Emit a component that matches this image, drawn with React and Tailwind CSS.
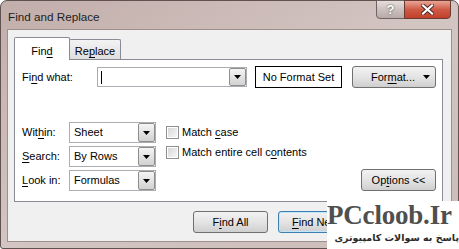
import React from "react";

const U = ({ children }) => (
  <span className="underline decoration-1 underline-offset-[2px]">{children}</span>
);

const Arrow = () => (
  <svg width="7" height="4" viewBox="0 0 7 4">
    <path d="M0 0H7L3.5 4Z" fill="#000" />
  </svg>
);

const ArrowBtn = () => (
  <div className="w-[17px] h-full border border-[#8d8d8d] rounded-[2px] bg-gradient-to-b from-[#f4f4f4] to-[#d2d2d2] flex items-center justify-center shrink-0">
    <Arrow />
  </div>
);

const Combo = ({ value, w }) => (
  <div className={`flex h-[21px] border border-[#abadb3] bg-white ${w}`}>
    <div className="flex-1 flex items-center pl-[4px]">{value}</div>
    <ArrowBtn />
  </div>
);

const Btn = ({ children, w = "w-[75px]", def = false, cls = "" }) => (
  <div
    className={`${w} h-[22px] rounded-[3px] border ${
      def ? "border-[#3c7fb1] shadow-[inset_0_0_0_1px_#bfe6fb]" : "border-[#707070]"
    } bg-gradient-to-b from-[#f2f2f2] via-[#e4e4e4] to-[#cfcfcf] flex items-center justify-center ${cls}`}
  >
    {children}
  </div>
);

const Check = ({ children }) => (
  <div className="flex items-center h-[20px] gap-[3px]">
    <div className="w-[13px] h-[13px] border border-[#8e8f8f] bg-white p-[1px]">
      <div className="w-full h-full bg-gradient-to-br from-[#d8d8d8] to-[#f6f6f6]" />
    </div>
    <span>{children}</span>
  </div>
);

export default function App() {
  return (
    <div
      className="w-[459px] h-[249px] bg-white relative overflow-hidden text-[11px] text-black"
      style={{ fontFamily: '"Liberation Sans", Arial, sans-serif' }}
    >
      <div className="h-full rounded-t-[7px] rounded-b-[3px] border border-[#5f5250] bg-gradient-to-br from-[#c2aeaa] via-[#d3c5c2] to-[#cbbcb8] flex flex-col px-[6px] pb-[6px]">
        {/* title bar */}
        <div className="h-[28px] flex items-start shrink-0">
          <div className="pl-[1px] pt-[7px] text-[11.7px] text-[#1e1e1e]">Find and Replace</div>
          <div className="ml-auto -mt-px flex h-[19px] mr-[1px]">
            <div className="w-[29px] h-full rounded-bl-[4px] border border-[#6e6361] bg-gradient-to-b from-[#e7dedc] via-[#cdc1be] to-[#b8aaa7] flex items-center justify-center text-white font-bold text-[13px] leading-none [text-shadow:0_0_2px_#333]">
              ?
            </div>
            <div className="w-[47px] h-full -ml-px rounded-br-[4px] border border-[#6b3a33] bg-gradient-to-b from-[#e8a596] via-[#cf5a45] to-[#c2402b] flex items-center justify-center">
              <svg width="13" height="11" viewBox="0 0 13 11">
                <path d="M2 1.5L11 9.5M11 1.5L2 9.5" stroke="#4a2a26" strokeWidth="4" strokeLinecap="square" />
                <path d="M2 1.5L11 9.5M11 1.5L2 9.5" stroke="#fff" strokeWidth="2.2" strokeLinecap="square" />
              </svg>
            </div>
          </div>
        </div>

        {/* client */}
        <div className="flex-1 border border-[#9e8f8b] bg-[#f0f0f0] flex flex-col pl-[6px] pt-[7px]">
          {/* tabs */}
          <div className="flex items-end h-[22px]">
            <div className="relative z-10 -mb-px w-[56px] h-[23px] border border-b-0 border-[#898c95] bg-white rounded-t-[2px] flex items-start justify-center pt-[5px]">
              <span>
                Fin<U>d</U>
              </span>
            </div>
            <div className="-ml-px w-[52px] h-[20px] border border-b-0 border-[#898c95] bg-gradient-to-b from-[#f3f3f3] to-[#dedede] rounded-t-[2px] flex items-start justify-center pt-[3px]">
              <span>
                Re<U>p</U>lace
              </span>
            </div>
          </div>

          {/* panel */}
          <div className="w-[429px] h-[143px] border border-[#898c95] bg-white flex flex-col pl-[7px] pr-[6px] pt-[6px]">
            <div className="flex items-center h-[22px]">
              <div className="w-[75px]">
                Fi<U>n</U>d what:
              </div>
              <div className="flex w-[150px] h-[20px] border border-[#abadb3] bg-white">
                <div className="flex-1 flex items-center pl-[3px]">
                  <div className="w-px h-[13px] bg-black" />
                </div>
                <ArrowBtn />
              </div>
              <div className="ml-[8px] w-[87px] h-[22px] border border-black bg-white flex items-center justify-center">
                No Format Set
              </div>
              <Btn w="w-[84px]" cls="ml-[10px] justify-between px-[2px] h-[21px]">
                <span className="flex-1 text-center pl-[8px]">
                  For<U>m</U>at...
                </span>
                <span className="pr-[3px] flex">
                  <Arrow />
                </span>
              </Btn>
            </div>

            <div className="flex mt-[34px]">
              <div className="flex flex-col gap-[3px]">
                <div className="flex items-center">
                  <div className="w-[47px]">
                    Wit<U>h</U>in:
                  </div>
                  <Combo value="Sheet" w="w-[87px]" />
                </div>
                <div className="flex items-center">
                  <div className="w-[47px]">
                    <U>S</U>earch:
                  </div>
                  <Combo value="By Rows" w="w-[87px]" />
                </div>
                <div className="flex items-center">
                  <div className="w-[47px]">
                    <U>L</U>ook in:
                  </div>
                  <Combo value="Formulas" w="w-[87px]" />
                </div>
              </div>
              <div className="ml-[10px] flex flex-col">
                <Check>
                  Match <U>c</U>ase
                </Check>
                <Check>
                  Match entire cell c<U>o</U>ntents
                </Check>
              </div>
              <div className="ml-auto flex items-end">
                <Btn w="w-[75px]">
                  <span>
                    Op<U>t</U>ions &lt;&lt;
                  </span>
                </Btn>
              </div>
            </div>
          </div>

          {/* bottom buttons */}
          <div className="flex justify-end gap-[10px] mt-[9px] pr-[13px]">
            <Btn>
              <span>
                F<U>i</U>nd All
              </span>
            </Btn>
            <Btn def>
              <span>
                <U>F</U>ind Next
              </span>
            </Btn>
            <Btn>
              <span>Close</span>
            </Btn>
          </div>
        </div>
      </div>

      {/* watermark overlay */}
      <div className="absolute left-[327px] top-[201px] w-[132px] h-[48px] bg-white flex flex-col items-end">
        <div
          className="w-full text-[27px] font-bold leading-[28px] text-[#4f4f4f] whitespace-nowrap tracking-[-0.2px]"
          style={{ fontFamily: '"Liberation Serif", serif' }}
        >
          PCcloob.Ir
        </div>
        <div
          dir="rtl"
          className="w-full text-[9.5px] font-bold leading-[18px] text-[#2b2b2b] whitespace-nowrap"
          style={{ fontFamily: '"DejaVu Sans", sans-serif' }}
        >
          پاسخ به سوالات کامپیوتری
        </div>
      </div>
    </div>
  );
}
